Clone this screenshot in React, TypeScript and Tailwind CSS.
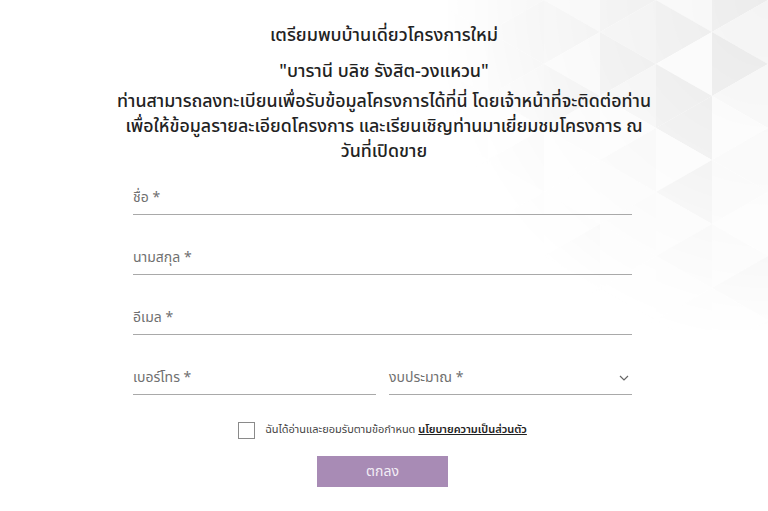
import React from "react";

function Bg() {
  const W = 320;
  const H = 330;
  const cw = 56;
  const ch = 64;
  const shades = ["#f1f1f1", "#f7f7f7", "#ececec", "#f4f4f4", "#fafafa", "#efefef", "#f5f5f5", "#e9e9e9"];
  const polys: { pts: string; fill: string }[] = [];
  let n = 0;
  for (let c = 0; c * cw < W + cw; c++) {
    for (let r = -1; r * ch < H + ch; r++) {
      const x0 = W - c * cw;
      const x1 = x0 - cw;
      const off = c % 2 === 0 ? 0 : ch / 2;
      const y = r * ch + off;
      polys.push({ pts: `${x0},${y} ${x0},${y + ch} ${x1},${y + ch / 2}`, fill: shades[(n * 3 + c) % shades.length] });
      polys.push({ pts: `${x0},${y + ch} ${x1},${y + ch / 2} ${x1},${y + ch * 1.5}`, fill: shades[(n * 5 + 2) % shades.length] });
      n++;
    }
  }
  return (
    <svg className="absolute right-0 top-0" width={W} height={H} viewBox={`0 0 ${W} ${H}`}>
      <defs>
        <radialGradient id="fadeMask" cx="1" cy="0" r="1.05">
          <stop offset="0" stopColor="#fff" stopOpacity="1" />
          <stop offset="0.55" stopColor="#fff" stopOpacity="0.55" />
          <stop offset="1" stopColor="#fff" stopOpacity="0" />
        </radialGradient>
        <mask id="m">
          <rect width={W} height={H} fill="url(#fadeMask)" />
        </mask>
      </defs>
      <g mask="url(#m)">
        {polys.map((p, i) => (
          <polygon key={i} points={p.pts} fill={p.fill} />
        ))}
      </g>
    </svg>
  );
}

function Field({ label, chevron }: { label: string; chevron?: boolean }) {
  return (
    <div className="flex h-[34px] items-end justify-between border-b border-[#a9a9a9] pb-[9px]">
      <span className="text-[14px] leading-none text-[#707070]">{label}</span>
      {chevron && (
        <svg width="10" height="6" viewBox="0 0 10 6" className="mr-[3px] mb-[4px]">
          <path d="M1 1l4 4 4-4" fill="none" stroke="#666" strokeWidth="1.2" />
        </svg>
      )}
    </div>
  );
}

export default function App() {
  return (
    <div
      className="relative h-[511px] w-[768px] overflow-hidden bg-white"
      style={{ fontFamily: '"Noto Sans Thai", "Noto Sans", "Open Sans", sans-serif' }}
    >
      <Bg />
      <div className="relative flex flex-col items-center">
        <h1 className="mt-[23px] text-[18px] font-medium leading-[26px] text-[#222]">
          เตรียมพบบ้านเดี่ยวโครงการใหม่
        </h1>
        <h2 className="mt-[10px] text-[18px] font-medium leading-[26px] text-[#222]">
          "บารานี บลิซ รังสิต-วงแหวน"
        </h2>
        <p className="mt-[4px] text-center text-[17.8px] font-medium leading-[25px] text-[#222]">
          ท่านสามารถลงทะเบียนเพื่อรับข้อมูลโครงการได้ที่นี่ โดยเจ้าหน้าที่จะติดต่อท่าน
          <br />
          เพื่อให้ข้อมูลรายละเอียดโครงการ และเรียนเชิญท่านมาเยี่ยมชมโครงการ ณ
          <br />
          วันที่เปิดขาย
        </p>
        <div className="mr-[3px] mt-[17px] flex w-[499px] flex-col gap-[26px]">
          <Field label="ชื่อ *" />
          <Field label="นามสกุล *" />
          <Field label="อีเมล *" />
          <div className="grid grid-cols-2 gap-[13px]">
            <Field label="เบอร์โทร *" />
            <Field label="งบประมาณ *" chevron />
          </div>
        </div>
        <div className="mr-[3px] mt-[27px] flex items-center gap-[10px]">
          <span className="h-[17px] w-[17px] border border-[#8a8a8a] bg-white" />
          <span className="text-[11px] text-[#444]">
            ฉันได้อ่านและยอมรับตามข้อกำหนด{" "}
            <span className="font-semibold text-[#222] underline">นโยบายความเป็นส่วนตัว</span>
          </span>
        </div>
        <button className="mr-[3px] mt-[17px] h-[31px] w-[131px] bg-[#a88bb5] text-[14px] text-[#f3eef6]">
          ตกลง
        </button>
      </div>
    </div>
  );
}
